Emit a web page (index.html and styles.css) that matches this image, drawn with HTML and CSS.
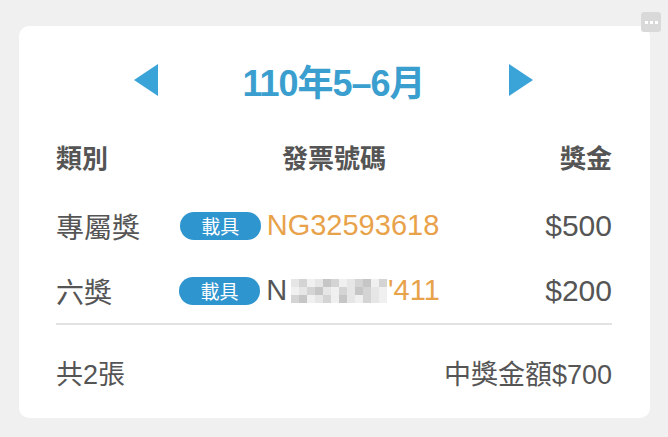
FILE: index.html
```html
<!DOCTYPE html>
<html lang="zh-Hant">
<head>
<meta charset="utf-8">
<link rel="stylesheet" href="styles.css">
</head>
<body>
<div class="more"><span></span><span></span><span></span></div>
<div class="card">
  <div class="period">
    <svg class="arrow" width="24" height="32" viewBox="0 0 24 32"><polygon points="24,0 24,32 0,16" fill="#3aa3d8"/></svg>
    <div class="period-text">110年5–6月</div>
    <svg class="arrow" width="24" height="32" viewBox="0 0 24 32"><polygon points="0,0 0,32 24,16" fill="#3aa3d8"/></svg>
  </div>
  <div class="head">
    <div class="h-left">類別</div>
    <div class="h-mid">發票號碼</div>
    <div class="h-right">獎金</div>
  </div>
  <div class="row">
    <div class="name">專屬獎</div>
    <div class="mid"><span class="badge">載具</span><span class="num">NG32593618</span></div>
    <div class="amt">$500</div>
  </div>
  <div class="row">
    <div class="name">六獎</div>
    <div class="mid"><span class="badge">載具</span><span class="num"><span class="dark">N</span><span class="mosaic"><i class="a"></i><i class="b"></i><i class="c"></i><i class="a"></i><i class="d"></i><i class="b"></i><i class="c"></i><i class="a"></i><i class="b"></i><i class="d"></i><i class="c"></i><i class="b"></i><i class="c"></i><i class="a"></i><i class="b"></i><i class="d"></i><i class="a"></i><i class="c"></i><i class="b"></i><i class="a"></i><i class="d"></i><i class="b"></i><i class="a"></i><i class="c"></i><i class="b"></i><i class="d"></i><i class="c"></i><i class="a"></i><i class="b"></i><i class="c"></i><i class="d"></i><i class="a"></i><i class="c"></i><i class="b"></i><i class="a"></i><i class="c"></i></span>'411</span></div>
    <div class="amt">$200</div>
  </div>
  <div class="divider"></div>
  <div class="foot">
    <div>共2張</div>
    <div>中獎金額$700</div>
  </div>
</div>
</body>
</html>
```

FILE: styles.css
```css
* { box-sizing: border-box; }
html, body { margin: 0; padding: 0; }
body {
  width: 668px;
  height: 437px;
  background: #f0f0f0;
  padding: 26px 18px 0 19px;
  font-family: "Liberation Sans", "Noto Sans CJK TC", sans-serif;
  color: #555;
  position: relative;
}
.more {
  position: absolute;
  left: 641px;
  top: 12px;
  width: 20px;
  height: 20px;
  background: #d9d9d9;
  border-radius: 3px;
  display: flex;
  align-items: center;
  justify-content: center;
  gap: 2px;
}
.more span { width: 3px; height: 3px; background: #fff; }
.card {
  width: 631px;
  height: 392px;
  background: #fff;
  border-radius: 10px;
  padding: 36px 38px 0 37px;
}
.period {
  display: flex;
  justify-content: center;
  align-items: center;
  gap: 84px;
  height: 36px;
  padding-right: 1px;
}
.period-text {
  font-size: 36px;
  font-weight: bold;
  color: #3a9fcf;
  letter-spacing: -1px;
}
.head {
  display: grid;
  grid-template-columns: 1fr auto 1fr;
  align-items: center;
  margin-top: 40px;
  height: 32px;
  font-size: 26px;
  font-weight: bold;
  color: #555;
}
.h-right { text-align: right; }
.row {
  display: grid;
  grid-template-columns: 100px 1fr 149px;
  align-items: center;
  height: 65px;
  font-size: 28px;
}
.head + .row { margin-top: 23px; }
.name { color: #555; }
.mid { display: flex; justify-content: center; align-items: center; gap: 6px; }
.badge {
  display: inline-flex;
  align-items: center;
  justify-content: center;
  width: 81px;
  height: 28px;
  border-radius: 14px;
  background: #2f95cf;
  color: #fff;
  font-size: 19px;
}
.num { font-size: 29px; color: #e8a24a; display: inline-flex; align-items: center; }
.dark { color: #555; }
.mosaic {
  display: inline-grid;
  grid-template-columns: repeat(12, 8px);
  grid-auto-rows: 8px;
  margin: 0 1px 0 4px;
}
.mosaic i { display: block; }
.mosaic .a { background: #e6e6e6; }
.mosaic .b { background: #d4d4d4; }
.mosaic .c { background: #f0f0f0; }
.mosaic .d { background: #c6c6c6; }
.amt { text-align: right; font-size: 30px; color: #555; }
.divider { height: 2px; background: #e2e2e2; margin-top: 0; }
.foot {
  display: flex;
  justify-content: space-between;
  align-items: center;
  height: 94px;
  font-size: 27px;
  color: #555;
}
```
